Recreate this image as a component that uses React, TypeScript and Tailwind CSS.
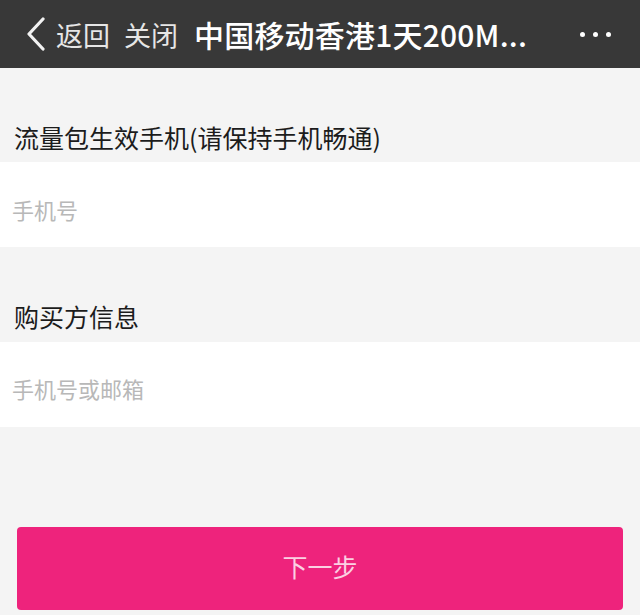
import React from "react";

export default function App() {
  const font = { fontFamily: '"Noto Sans CJK SC", "Noto Sans", sans-serif' };
  return (
    <div className="w-[640px] h-[615px] bg-[#f4f4f4] overflow-hidden" style={font}>
      <div className="h-[68px] bg-[#383838] flex items-center">
        <svg className="ml-[26px] shrink-0" width="20" height="34" viewBox="0 0 20 34">
          <path d="M17 2 L3 17 L17 32" fill="none" stroke="#f2f2f2" strokeWidth="3.2" strokeLinecap="round" strokeLinejoin="round" />
        </svg>
        <span className="ml-[10px] text-[27px] leading-none text-[#e6e6e6]">返回</span>
        <span className="ml-[14px] text-[27px] leading-none text-[#e6e6e6]">关闭</span>
        <span className="ml-[16px] text-[30px] leading-none text-white font-medium whitespace-nowrap tracking-[0.2px]">中国移动香港1天200M...</span>
        <div className="ml-auto mr-[29px] flex items-center gap-[8px]">
          <span className="w-[5px] h-[5px] rounded-full bg-white" />
          <span className="w-[5px] h-[5px] rounded-full bg-white" />
          <span className="w-[5px] h-[5px] rounded-full bg-white" />
        </div>
      </div>

      <div className="h-[94px] pt-[44px] flex items-center pl-[14px] text-[25px] leading-none text-[#1c1c1c]">
        流量包生效手机(请保持手机畅通)
      </div>
      <div className="h-[85px] bg-white pt-[8px] flex items-center pl-[12px] text-[22px] leading-none text-[#b8b8b8]">
        手机号
      </div>

      <div className="h-[95px] pt-[43px] flex items-center pl-[14px] text-[25px] leading-none text-[#1c1c1c]">
        购买方信息
      </div>
      <div className="h-[85px] bg-white pt-[7px] flex items-center pl-[12px] text-[22px] leading-none text-[#b8b8b8]">
        手机号或邮箱
      </div>

      <div className="mt-[100px] mx-[17px] h-[83px] rounded-[4px] bg-[#ee237c] flex items-center justify-center pb-[4px] text-[25px] leading-none text-[#fbd0e2]">
        下一步
      </div>
    </div>
  );
}
